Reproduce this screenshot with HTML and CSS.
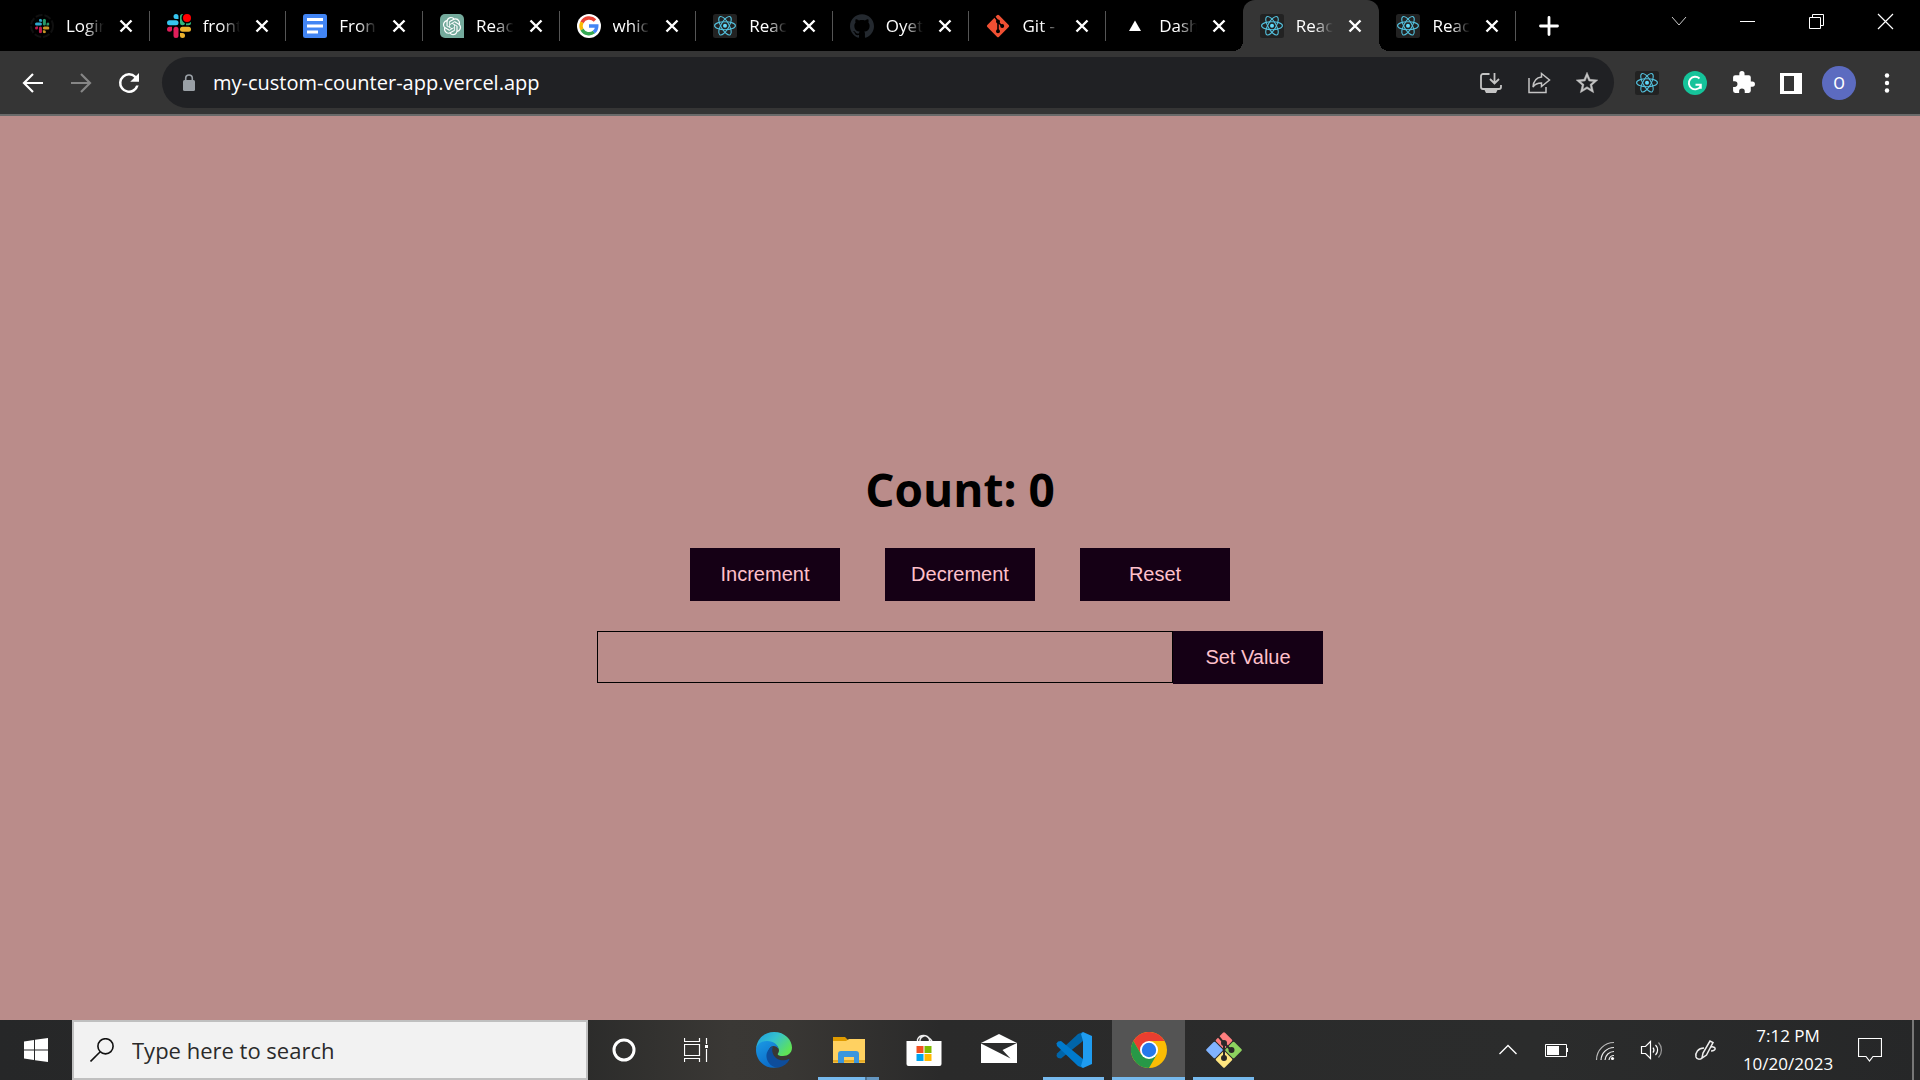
FILE: index.html
```html
<!DOCTYPE html>
<html lang="en">
<head>
<meta charset="utf-8">
<title>React App</title>
<link rel="stylesheet" href="styles.css">
</head>
<body>
<svg class="symbols" aria-hidden="true">
  <symbol id="close" viewBox="0 0 24 24"><path d="M6.500 6.500l11 11M17.500 6.500l-11 11" stroke="currentColor" stroke-width="2.400" fill="none"/></symbol>
  <symbol id="react" viewBox="0 0 24 24">
    <rect width="24" height="24" rx="2.500" fill="#222"/>
    <g fill="none" stroke="#53c1de" stroke-width="1.100"><ellipse cx="12" cy="11.700" rx="10.400" ry="4"/><ellipse cx="12" cy="11.700" rx="10.400" ry="4" transform="rotate(60 12 11.700)"/><ellipse cx="12" cy="11.700" rx="10.400" ry="4" transform="rotate(120 12 11.700)"/></g>
    <circle cx="12" cy="11.700" r="2" fill="#61dafb"/>
  </symbol>
  <symbol id="slack" viewBox="0 0 24 24">
    <g fill="#36c5f0"><rect x="0" y="6.300" width="11.500" height="5" rx="2.500"/><path d="M11.500 5H9A2.500 2.500 0 1 1 11.500 2.500z"/></g>
    <g fill="#2eb67d"><rect x="13" y="0" width="5" height="11.300" rx="2.500"/><path d="M19 11.300V8.800A2.500 2.500 0 1 1 21.500 11.300z"/></g>
    <g fill="#ecb22e"><rect x="13" y="12.800" width="11" height="5" rx="2.500"/><path d="M13 19h2.500A2.500 2.500 0 1 1 13 21.500z"/></g>
    <g fill="#e01e5a"><rect x="6.500" y="12.800" width="5" height="11.200" rx="2.500"/><path d="M5 12.800v2.500A2.500 2.500 0 1 1 2.500 12.800z"/></g>
  </symbol>
</svg>

<header class="browser">
  <div class="tabstrip">
    <nav class="tabs" aria-label="Open tabs">
      <div class="tab"><svg class="favicon" viewBox="0 0 24 24"><circle cx="12" cy="12" r="11" fill="none" stroke="#101010" stroke-width="2" stroke-dasharray="7 2"/><use href="#slack" x="5" y="4.500" width="14.500" height="15" opacity=".85"/></svg><button class="title">Login</button><button class="close" aria-label="Close tab"><svg><use href="#close"/></svg></button></div>
      <div class="tab"><svg class="favicon" viewBox="0 0 24 24"><use href="#slack" width="24" height="24"/><circle cx="20" cy="4" r="5.500" fill="#000"/><circle cx="20" cy="4" r="4" fill="#f00"/></svg><button class="title">front</button><button class="close" aria-label="Close tab"><svg><use href="#close"/></svg></button></div>
      <div class="tab"><svg class="favicon" viewBox="0 0 24 24"><rect width="24" height="24" rx="2.500" fill="#4285f4"/><path d="M4 5.500h16M4 12h16M4 18h11" stroke="#fff" stroke-width="2.800"/></svg><button class="title">Fron</button><button class="close" aria-label="Close tab"><svg><use href="#close"/></svg></button></div>
      <div class="tab"><svg class="favicon" viewBox="0 0 24 24"><path d="M5 0h14a5 5 0 0 1 5 5v19H5a5 5 0 0 1-5-5V5a5 5 0 0 1 5-5z" fill="#74aa9c"/><path transform="translate(2.900 2.900) scale(.76)" fill="#fff" d="M22.2819 9.8211a5.9847 5.9847 0 0 0-.5157-4.9108 6.0462 6.0462 0 0 0-6.5098-2.9A6.0651 6.0651 0 0 0 4.9807 4.1818a5.9847 5.9847 0 0 0-3.9977 2.9 6.0462 6.0462 0 0 0 .7427 7.0966 5.98 5.98 0 0 0 .511 4.9107 6.051 6.051 0 0 0 6.5146 2.9001A5.9847 5.9847 0 0 0 13.2599 24a6.0557 6.0557 0 0 0 5.7718-4.2058 5.9894 5.9894 0 0 0 3.9977-2.9001 6.0557 6.0557 0 0 0-.7475-7.0729zm-9.022 12.6081a4.4755 4.4755 0 0 1-2.8764-1.0408l.1419-.0804 4.7783-2.7582a.7948.7948 0 0 0 .3927-.6813v-6.7369l2.02 1.1686a.071.071 0 0 1 .038.052v5.5826a4.504 4.504 0 0 1-4.4945 4.4944zm-9.6607-4.1254a4.4708 4.4708 0 0 1-.5346-3.0137l.142.0852 4.783 2.7582a.7712.7712 0 0 0 .7806 0l5.8428-3.3685v2.3324a.0804.0804 0 0 1-.0332.0615L9.74 19.9502a4.4992 4.4992 0 0 1-6.1408-1.6464zM2.3408 7.8956a4.485 4.485 0 0 1 2.3655-1.9728V11.6a.7664.7664 0 0 0 .3879.6765l5.8144 3.3543-2.0201 1.1685a.0757.0757 0 0 1-.071 0l-4.8303-2.7865A4.504 4.504 0 0 1 2.3408 7.872zm16.5963 3.8558L13.1038 8.364 15.1192 7.2a.0757.0757 0 0 1 .071 0l4.8303 2.7913a4.4944 4.4944 0 0 1-.6765 8.1042v-5.6772a.79.79 0 0 0-.407-.667zm2.0107-3.0231l-.142-.0852-4.7735-2.7818a.7759.7759 0 0 0-.7854 0L9.409 9.2297V6.8974a.0662.0662 0 0 1 .0284-.0615l4.8303-2.7866a4.4992 4.4992 0 0 1 6.6802 4.66zM8.3065 12.863l-2.02-1.1638a.0804.0804 0 0 1-.038-.0567V6.0742a4.4992 4.4992 0 0 1 7.3757-3.4537l-.142.0805L8.704 5.459a.7948.7948 0 0 0-.3927.6813zm1.0976-2.3654l2.602-1.4998 2.6069 1.4998v2.9994l-2.5974 1.4997-2.6067-1.4997Z"/></svg><button class="title">Reac</button><button class="close" aria-label="Close tab"><svg><use href="#close"/></svg></button></div>
      <div class="tab"><svg class="favicon" viewBox="0 0 24 24"><circle cx="12" cy="12" r="12" fill="#fff"/><g fill="none" stroke-width="3.400"><path d="M18 6.500A8 8 0 0 0 5 8.400" stroke="#ea4335"/><path d="M5 8.200A8 8 0 0 0 5 15.800" stroke="#fbbc05"/><path d="M5 15.600A8 8 0 0 0 17 18" stroke="#34a853"/><path d="M12 12h7.800A8 8 0 0 1 16.800 18.200" stroke="#4285f4"/></g></svg><button class="title">whic</button><button class="close" aria-label="Close tab"><svg><use href="#close"/></svg></button></div>
      <div class="tab"><svg class="favicon"><use href="#react"/></svg><button class="title">Reac</button><button class="close" aria-label="Close tab"><svg><use href="#close"/></svg></button></div>
      <div class="tab"><svg class="favicon" viewBox="0 0 24 24"><path fill="#24292f" d="M12 .297c-6.630 0-12 5.373-12 12 0 5.303 3.438 9.800 8.205 11.385.6.113.82-.258.82-.577 0-.285-.01-1.040-.015-2.040-3.338.724-4.042-1.610-4.042-1.610C4.422 18.070 3.633 17.700 3.633 17.700c-1.087-.744.084-.729.084-.729 1.205.084 1.838 1.236 1.838 1.236 1.070 1.835 2.809 1.305 3.495.998.108-.776.417-1.305.76-1.605-2.665-.3-5.466-1.332-5.466-5.930 0-1.310.465-2.380 1.235-3.220-.135-.303-.54-1.523.105-3.176 0 0 1.005-.322 3.300 1.230.96-.267 1.980-.399 3-.405 1.020.006 2.040.138 3 .405 2.280-1.552 3.285-1.230 3.285-1.230.645 1.653.24 2.873.12 3.176.765.84 1.230 1.910 1.230 3.220 0 4.610-2.805 5.625-5.475 5.920.42.36.81 1.096.81 2.220 0 1.606-.015 2.896-.015 3.286 0 .315.21.69.825.57C20.565 22.092 24 17.592 24 12.297c0-6.627-5.373-12-12-12"/></svg><button class="title">Oyet</button><button class="close" aria-label="Close tab"><svg><use href="#close"/></svg></button></div>
      <div class="tab"><svg class="favicon" viewBox="0 0 24 24"><rect x="3.700" y="3.700" width="16.600" height="16.600" rx="1.500" transform="rotate(45 12 12)" fill="#f05033"/><g stroke="#000" stroke-width="1.600" fill="#000"><path d="M8 2l4 5v10M12 8l4 4" fill="none"/><circle cx="12" cy="7.500" r="1.200"/><circle cx="12" cy="17.300" r="1.200"/><circle cx="16.200" cy="12" r="1.200"/></g></svg><button class="title">Git -</button><button class="close" aria-label="Close tab"><svg><use href="#close"/></svg></button></div>
      <div class="tab"><svg class="favicon" viewBox="0 0 24 24"><path d="M12 6.500l6 10.500H6z" fill="#fff"/></svg><button class="title">Dash</button><button class="close" aria-label="Close tab"><svg><use href="#close"/></svg></button></div>
      <div class="tab active"><svg class="favicon"><use href="#react"/></svg><button class="title">Reac</button><button class="close" aria-label="Close tab"><svg><use href="#close"/></svg></button></div>
      <div class="tab"><svg class="favicon"><use href="#react"/></svg><button class="title">Reac</button><button class="close" aria-label="Close tab"><svg><use href="#close"/></svg></button></div>
    </nav>
    <button class="newtab" aria-label="New tab"><svg width="24" height="24" viewBox="0 0 24 24"><path d="M12 3.500v17M3.500 12h17" stroke="#fff" stroke-width="2.800" stroke-linecap="round"/></svg></button>
    <div class="window-buttons">
      <button aria-label="Search tabs"><svg width="24" height="24" viewBox="0 0 24 24"><path d="M5 8l7 8 7-8" stroke="#ccc" fill="none"/></svg></button>
      <button aria-label="Minimize"><svg width="24" height="24" viewBox="0 0 24 24"><path d="M4 12.500h15" stroke="#fff"/></svg></button>
      <button aria-label="Restore"><svg width="24" height="24" viewBox="0 0 24 24"><path d="M4.500 8.500h11v11h-11zM7.500 8.500v-3h11v11h-3" stroke="#fff" fill="none"/></svg></button>
      <button aria-label="Close"><svg width="24" height="24" viewBox="0 0 24 24"><path d="M4 5l15 15M19 5L4 20" stroke="#fff" stroke-width="1.200"/></svg></button>
    </div>
  </div>
  <div class="toolbar">
    <button class="tool" aria-label="Back"><svg width="24" height="24" viewBox="0 0 24 24"><path d="M22 12H3.500M12 3L3 12l9 9" stroke="#fff" stroke-width="2.200" fill="none"/></svg></button>
    <button class="tool" aria-label="Forward"><svg width="24" height="24" viewBox="0 0 24 24"><path d="M2 12h18.500M12 3l9 9-9 9" stroke="#868686" stroke-width="2.200" fill="none"/></svg></button>
    <button class="tool" aria-label="Reload"><svg width="30" height="30" viewBox="0 0 24 24"><path fill="#fff" d="M17.650 6.350A7.950 7.950 0 0 0 12 4a8 8 0 1 0 7.730 10h-2.080A6 6 0 1 1 12 6c1.660 0 3.140.69 4.220 1.780L13 11h7V4z"/></svg></button>
    <div class="omnibox">
      <svg class="lock" width="12" height="17" viewBox="0 0 12 17"><rect y="6" width="12" height="11" rx="1.500" fill="#9aa0a6"/><path d="M2.700 7V4.300a3.300 3.300 0 0 1 6.600 0V7" stroke="#9aa0a6" stroke-width="1.600" fill="none"/></svg>
      <input class="url" type="text" aria-label="Address" value="my-custom-counter-app.vercel.app">
      <button class="tool" aria-label="Install app"><svg width="24" height="24" viewBox="0 0 24 24"><g fill="none" stroke="#c4c4c4" stroke-width="1.800"><path d="M10.500 3H4a2 2 0 0 0-2 2v11a2 2 0 0 0 2 2h16a2 2 0 0 0 2-2v-2M15.500 2v10M11 8l4.500 4.500L20 8"/></g><path d="M5 18h14l-2 4H7z" fill="#c4c4c4"/></svg></button>
      <button class="tool" aria-label="Share"><svg width="24" height="24" viewBox="0 0 24 24"><path d="M2 7v14.500h17V16M14.500 2.500l8 6.500-8 6.500V12c-4 0-6.500 1-8.500 4C6.500 10 9.500 6.500 14.500 6z" fill="none" stroke="#c4c4c4" stroke-width="1.500"/></svg></button>
      <button class="tool" aria-label="Bookmark"><svg width="26" height="26" viewBox="0 0 24 24"><path fill="#c4c4c4" stroke="#c4c4c4" stroke-width=".4" d="M22 9.240l-7.190-.62L12 2 9.190 8.630 2 9.240l5.460 4.730L5.820 21 12 17.270 18.180 21l-1.630-7.030L22 9.240zM12 15.400l-3.760 2.270 1-4.280-3.320-2.880 4.380-.38L12 6.100l1.710 4.040 4.380.38-3.320 2.880 1 4.280L12 15.400z"/></svg></button>
    </div>
    <div class="extensions">
      <button class="tool" aria-label="React Developer Tools"><svg width="24" height="24"><use href="#react"/></svg></button>
      <button class="tool" aria-label="Grammarly"><svg width="24" height="24" viewBox="0 0 24 24"><circle cx="12" cy="12" r="12" fill="#15c39a"/><path d="M16.500 7.500A6.300 6.300 0 1 0 17.600 15.200M12.500 13.700h5.300v4" fill="none" stroke="#fff" stroke-width="1.900"/></svg></button>
      <button class="tool" aria-label="Extensions"><svg width="25" height="25" viewBox="0 0 24 24"><path fill="#fff" d="M20.500 11H19V7a2 2 0 0 0-2-2h-4V3.500a2.500 2.500 0 0 0-5 0V5H4a2 2 0 0 0-2 2v3.800h1.500a2.700 2.700 0 0 1 0 5.400H2V20a2 2 0 0 0 2 2h3.800v-1.500a2.700 2.700 0 0 1 5.400 0V22H17a2 2 0 0 0 2-2v-4h1.500a2.500 2.500 0 0 0 0-5z"/></svg></button>
      <button class="tool" aria-label="Side panel"><svg width="22" height="22" viewBox="0 0 22 22"><path fill="#fff" fill-rule="evenodd" d="M0 1h22v21H0zM4 4v15h10V4z"/></svg></button>
      <button class="tool" aria-label="Profile"><span class="avatar">O</span></button>
      <button class="tool" aria-label="Menu"><svg width="24" height="24" viewBox="0 0 24 24" fill="#fff"><circle cx="12" cy="4.500" r="2.200"/><circle cx="12" cy="12" r="2.200"/><circle cx="12" cy="19.500" r="2.200"/></svg></button>
    </div>
  </div>
</header>

<main class="counter">
  <h1 class="count">Count: 0</h1>
  <div class="actions">
    <button class="btn">Increment</button>
    <button class="btn">Decrement</button>
    <button class="btn">Reset</button>
  </div>
  <form class="set-value">
    <input class="value" type="text" aria-label="Value">
    <button class="btn" type="button">Set Value</button>
  </form>
</main>

<footer class="taskbar">
  <button class="start" aria-label="Start"><svg width="24" height="24" viewBox="0 0 24 24" fill="#fff"><path d="M0 3.400l10-1.400v9.500H0zM11 1.800L24 0v11.500H11zM0 12.500h10V22L0 20.600zM11 12.500h13V24l-13-1.800z"/></svg></button>
  <label class="search">
    <svg width="24" height="24" viewBox="0 0 24 24"><path d="M.5 23.500L10 14" stroke="#111" stroke-width="1.600"/><circle cx="15.500" cy="8.300" r="7.600" stroke="#111" stroke-width="1.600" fill="none"/></svg>
    <input type="text" placeholder="Type here to search" aria-label="Search">
  </label>
  <button class="start" aria-label="Cortana"><svg width="24" height="24" viewBox="0 0 24 24"><circle cx="12" cy="12" r="10" fill="none" stroke="#fff" stroke-width="3"/></svg></button>
  <button class="start" aria-label="Task view"><svg width="24" height="24" viewBox="0 0 24 24"><path d="M.5 0v3.500h15V0M.5 6.500h15v11H.5zM.5 24v-3.500h15V24M22.500 0v6M22.500 11v13" stroke="#fff" stroke-width="1.200" fill="none"/><path d="M21 7h3v3h-3z" fill="#fff"/></svg></button>
  <div class="apps">
    <button class="app" aria-label="Edge"><svg width="36" height="36" viewBox="0 0 36 36">
      <defs><linearGradient id="e1" x1="0" y1="0" x2="1" y2=".6"><stop offset="0" stop-color="#1b9de2"/><stop offset=".5" stop-color="#35c1cf"/><stop offset="1" stop-color="#5fe356"/></linearGradient><linearGradient id="e2" x1="0" y1="0" x2=".5" y2="1"><stop offset="0" stop-color="#1b9ae4"/><stop offset="1" stop-color="#0b6cc9"/></linearGradient></defs>
      <path d="M0 17C1 7 8 0 18 0c11 0 18 8 18 15.500 0 5.500-4 8.500-9 8.500-4 0-6-1-5-2.500 3-4-1-11-10-11C6 10.500 1 14 0 17z" fill="url(#e1)"/>
      <path d="M0 18c0-5 5-9 11-9 7 0 11 4 11.500 8-1-2-3-3-5-3-3 0-6 4-5.500 9 .5 6 5 11 11 12C10 38.500 0 29 0 18z" fill="url(#e2)"/>
      <path d="M17 14.500C13 16 10 20 10.500 25c.5 6 6 11 12.500 10.500 5-1.200 8.500-4.200 10.500-8-.3-.7-1-.5-1.500-.2-3 1.500-8.500 1.700-12-1.300-4-3.500-4.500-8.500-3-11.500z" fill="#0e4d9b"/>
    </svg></button>
    <button class="app running multi" aria-label="File Explorer"><svg width="36" height="36" viewBox="0 0 36 36"><path d="M2 5h12l3 3v3H2z" fill="#e09b00"/><path d="M2 9h13l3-2h16v24H2z" fill="#ffd161"/><path d="M2 28h32v2.500H2z" fill="#e6ab25"/><path d="M7 31V22a3 3 0 0 1 3-3h15a3 3 0 0 1 3 3v9h-5v-6H13v6z" fill="#3a96dd"/></svg></button>
    <button class="app" aria-label="Microsoft Store"><svg width="36" height="36" viewBox="0 0 36 36"><path d="M11.500 10V7.500a6.500 6.500 0 0 1 12 0V10M14 10V8a5 5 0 0 1 9-2c2 2 3 2 3 4" stroke="#eee" stroke-width="1.400" fill="none"/><path d="M.5 9h35v23a2 2 0 0 1-2 2h-31a2 2 0 0 1-2-2z" fill="#fff"/><path d="M10.500 14h7v7h-7z" fill="#f25022"/><path d="M18.500 14h7v7h-7z" fill="#7fba00"/><path d="M10.500 22h7v7h-7z" fill="#00a4ef"/><path d="M18.500 22h7v7h-7z" fill="#ffb900"/></svg></button>
    <button class="app" aria-label="Mail"><svg width="36" height="36" viewBox="0 0 36 36"><path d="M0 11L18 2l18 9v20H0z" fill="#fff"/><path d="M0 11h36L21.500 18l8 8.500L0 11.500z" fill="#2b2c2c"/></svg></button>
    <button class="app running" aria-label="Visual Studio Code"><svg width="36" height="36" viewBox="0 0 36 36"><path d="M27 9L5 26.500 2 26 .5 24 1 21.500 22 2l5-2z" fill="#0065a9"/><path d="M27 27L5 9 2 9.500.5 11.500 1 14l21 20 5 2z" fill="#007acc"/><path d="M27 0l9 4v28l-9 4-2-2 2-7V9l-2-7z" fill="#1f9cf0"/></svg></button>
    <button class="app running current" aria-label="Chrome"><svg width="36" height="36" viewBox="0 0 36 36"><circle cx="18" cy="18" r="18" fill="#fbbc04"/><path d="M2.400 9A18 18 0 0 1 33.600 9H18l-7.800 13.500z" fill="#ea3e30"/><path d="M2.400 9A18 18 0 0 0 18 36l7.800-13.500H10.200z" fill="#279847"/><circle cx="18" cy="18" r="9" fill="#fff"/><circle cx="18" cy="18" r="7.200" fill="#2678eb"/></svg></button>
    <button class="app running" aria-label="Git Bash"><svg width="36" height="36" viewBox="0 0 36 36"><g transform="rotate(45 18 18)"><rect x="5" y="5" width="12.500" height="12.500" rx="1.500" fill="#ff7f7f"/><rect x="18.500" y="5" width="12.500" height="12.500" rx="1.500" fill="#8dd35f"/><rect x="5" y="18.500" width="12.500" height="12.500" rx="1.500" fill="#80b3ff"/><rect x="18.500" y="18.500" width="12.500" height="12.500" rx="1.500" fill="#ffe680"/></g><g transform="rotate(45 18 18)"><rect x="5" y="5" width="12.500" height="12.500" rx="1.500" fill="#80b3ff" opacity="0"/></g><g fill="#2b2929" stroke="#2b2929" stroke-width="2"><path d="M12 4l6 7v15M18 11l7 7" fill="none"/><circle cx="18" cy="11" r="2"/><circle cx="18" cy="26" r="2"/><circle cx="25.500" cy="18" r="2"/></g></svg></button>
  </div>
  <div class="tray">
    <button aria-label="Show hidden icons"><svg width="24" height="24" viewBox="0 0 24 24"><path d="M3.500 16l8.500-8.500 8.500 8.500" stroke="#fff" stroke-width="1.400" fill="none"/></svg></button>
    <button aria-label="Battery"><svg width="24" height="24" viewBox="0 0 24 24"><path d="M1.500 6.500h21v12h-21z" stroke="#fff" fill="none"/><path d="M3 8h12v9H3zM23 10h1v4h-1z" fill="#fff"/></svg></button>
    <button aria-label="Network"><svg width="24" height="24" viewBox="0 0 24 24"><g fill="none" stroke="#bbb" stroke-width="1.200"><path d="M4.500 22A17.500 17.500 0 0 1 22 4.500"/><path d="M9 22A13 13 0 0 1 22 9.500" stroke="#eee"/><path d="M13 22a9 9 0 0 1 9-8.500M17 22a5 5 0 0 1 5-4.500" stroke="#eee"/></g><circle cx="20.500" cy="20.500" r="1.600" fill="#fff"/></svg></button>
    <button aria-label="Volume"><svg width="24" height="24" viewBox="0 0 24 24"><path d="M1.500 8.500h4l5-5v17l-5-5h-4zM13 9.500a4 4 0 0 1 0 5M15.500 7a7 7 0 0 1 0 10" stroke="#fff" stroke-width="1.200" fill="none"/><path d="M18.500 4.500a11 11 0 0 1 0 15" stroke="#999" stroke-width="1.200" fill="none"/></svg></button>
    <button class="pen" aria-label="Pen"><svg width="24" height="24" viewBox="0 0 24 24"><path d="M8 20l1-5 7-12 3 1.500-6.500 12.500zM10 10c-6 0-9 5-8 9 1 3 5 3 6.500 0M17 9c5-1 6 4 0 4" stroke="#eee" stroke-width="1.500" fill="none"/></svg></button>
    <time class="clock" datetime="2023-10-20T19:12"><span>7:12 PM</span><span>10/20/2023</span></time>
    <button class="notify" aria-label="Notifications"><svg width="24" height="24" viewBox="0 0 24 24"><path d="M.5.500h23v18H15L11.500 23 8 18.500H.5z" stroke="#fff" stroke-width="1.200" fill="none"/></svg></button>
    <button class="desktop" aria-label="Show desktop"></button>
  </div>
</footer>
</body>
</html>
```
FILE: styles.css
```css
* {
  box-sizing: border-box;
}

body {
  margin: 0;
  min-height: 100vh;
  display: flex;
  flex-direction: column;
  background: #ba8c8a;
  font-family: "Open Sans", "Noto Sans", sans-serif;
}

button,
input {
  margin: 0;
  padding: 0;
  border: 0;
  background: none;
  color: inherit;
  font: inherit;
  outline: none;
}

svg {
  display: block;
  flex: none;
}

.symbols {
  position: absolute;
  width: 0;
  height: 0;
}

/* Browser tabs */
.browser {
  border-bottom: 2px solid #6a6a6a;
  color: #fff;
}

.tabstrip {
  display: flex;
  height: 51px;
  padding-left: 15px;
  background: #000;
}

.tabs {
  display: flex;
  flex: 1;
  min-width: 0;
}

.tab {
  position: relative;
  display: flex;
  flex: 1;
  min-width: 0;
  align-items: center;
  padding: 0 12px 0 17px;
}

.tab:first-child {
  padding-left: 15px;
}

.tab::after {
  content: "";
  position: absolute;
  top: 11px;
  right: 0;
  width: 1px;
  height: 30px;
  background: #555;
}

.tab.active {
  background: #353535;
  border-radius: 12px 12px 0 0;
}

.tab.active::before,
.tab.active::after {
  content: "";
  position: absolute;
  top: auto;
  bottom: 0;
  width: 10px;
  height: 10px;
}

.tab.active::before {
  left: -10px;
  background: radial-gradient(circle at 0 0, #000 10px, #353535 10px);
}

.tab.active::after {
  right: -10px;
  background: radial-gradient(circle at 100% 0, #000 10px, #353535 10px);
}

.tab:has(+ .active)::after {
  display: none;
}

.favicon {
  width: 24px;
  height: 24px;
}

.title {
  flex: 1;
  min-width: 0;
  margin: 0 10px 0 12px;
  overflow: hidden;
  font-size: 17px;
  line-height: 24px;
  text-align: left;
  white-space: nowrap;
  -webkit-mask-image: linear-gradient(to right, #000 50%, transparent);
  mask-image: linear-gradient(to right, #000 50%, transparent);
}

.close svg {
  width: 24px;
  height: 24px;
}

.newtab {
  display: grid;
  place-items: center;
  width: 66px;
}

.window-buttons {
  display: flex;
  height: 42px;
  padding-left: 62px;
}

.window-buttons button {
  display: grid;
  place-items: center;
  width: 69px;
}

/* Toolbar */
.toolbar {
  display: flex;
  align-items: center;
  height: 63px;
  padding: 0 9px;
  background: #353535;
}

.tool {
  display: grid;
  flex: none;
  place-items: center;
  width: 48px;
  height: 48px;
}

.omnibox {
  display: flex;
  flex: 1;
  align-items: center;
  height: 51px;
  margin: 0 9px;
  padding: 0 3px 0 21px;
  border-radius: 26px;
  background: #202124;
}

.url {
  flex: 1;
  min-width: 0;
  margin-left: 18px;
  font-size: 20px;
  line-height: 28px;
}

.extensions {
  display: flex;
}

.avatar {
  width: 34px;
  height: 34px;
  border-radius: 50%;
  background: #5c6bc0;
  font-family: Roboto, sans-serif;
  font-size: 17px;
  line-height: 34px;
}

/* Counter page */
.counter {
  display: flex;
  flex: 1;
  flex-direction: column;
  align-items: center;
  justify-content: center;
}

.count {
  margin: 0 0 22px;
  color: #000;
  font-size: 46px;
  line-height: 74px;
}

.actions {
  display: flex;
  gap: 45px;
  margin-bottom: 30px;
}

.btn {
  width: 150px;
  height: 53px;
  background: #150015;
  color: #ffc0cb;
  font-family: "Liberation Sans", Arial, sans-serif;
  font-size: 20px;
}

.set-value {
  display: flex;
}

.value {
  width: 30vw;
  height: 52px;
  padding: 0 12px;
  border: 1px solid #000;
  font-size: 20px;
}

/* Taskbar */
.taskbar {
  display: flex;
  height: 60px;
  background: linear-gradient(to right, #262728 0, #2b2b2a 30%, #3a3835 38%, #393734 41%, #2a2a2a 49%, #2b2c2c 80%, #262728);
  color: #fff;
}

.start {
  display: grid;
  flex: none;
  place-items: center;
  width: 72px;
}

.search {
  display: flex;
  align-items: center;
  width: 516px;
  padding: 0 16px;
  border: 2px solid #c0c0c0;
  background: #f2f2f2;
  color: #222;
}

.search input {
  flex: 1;
  min-width: 0;
  margin-left: 18px;
  font-size: 22px;
  line-height: 32px;
}

.search input::placeholder {
  color: #2a2a2a;
  opacity: 1;
}

.apps {
  display: flex;
  gap: 2px;
  margin-left: 5px;
}

.app {
  position: relative;
  display: grid;
  place-items: center;
  width: 73px;
}

.running::after {
  content: "";
  position: absolute;
  right: 6px;
  bottom: 0;
  left: 6px;
  height: 3px;
  background: #76b9ed;
}

.multi::after {
  background: linear-gradient(to right, #76b9ed 47px, #4c7392 47px, #4c7392 49px, #6496c0 49px);
}

.current {
  background: #545454;
}

.current::after {
  right: 0;
  left: 0;
}

.tray {
  display: flex;
  margin-left: auto;
}

.tray button {
  display: grid;
  place-items: center;
  width: 48px;
}

.tray .pen {
  width: 60px;
}

.clock {
  display: flex;
  flex-direction: column;
  justify-content: center;
  width: 104px;
  font-size: 17px;
  line-height: 28px;
  text-align: center;
}

.tray .notify {
  width: 60px;
}

.tray .desktop {
  width: 8px;
  margin-left: 12px;
  border-left: 2px solid #777;
}
```
